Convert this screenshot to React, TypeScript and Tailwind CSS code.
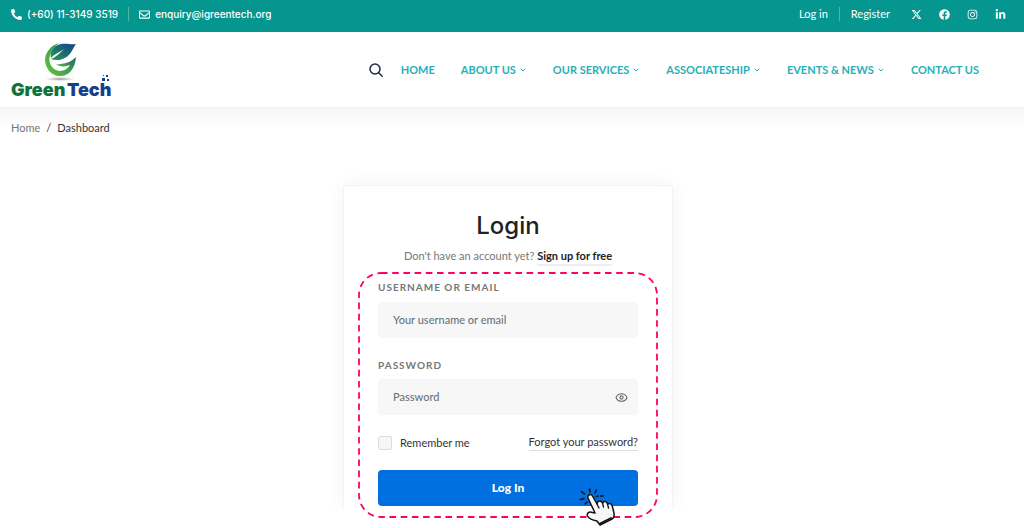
import { useState } from "react";
import { FaFacebook, FaInstagram, FaLinkedinIn, FaPhoneAlt, FaRegEnvelope } from "react-icons/fa";
import { FaXTwitter } from "react-icons/fa6";
import { ChevronDown, Eye } from "lucide-react";

const navItems = [
  { label: "HOME", menu: false },
  { label: "ABOUT US", menu: true },
  { label: "OUR SERVICES", menu: true },
  { label: "ASSOCIATESHIP", menu: true },
  { label: "EVENTS & NEWS", menu: true },
  { label: "CONTACT US", menu: false },
];

const socials = [
  { name: "X", Icon: FaXTwitter },
  { name: "Facebook", Icon: FaFacebook },
  { name: "Instagram", Icon: FaInstagram },
  { name: "LinkedIn", Icon: FaLinkedinIn },
];

function TopBar() {
  return (
    <div className="flex h-8 items-center justify-between bg-[#04968f] pr-[18px] pb-1 pl-[11px] text-[11px] text-white">
      <div className="flex items-center font-[Inter,sans-serif] text-[10px] font-medium">
        <a href="#phone" className="flex items-center gap-[5px]">
          <FaPhoneAlt size={11} />
          <span>(+60) 11-3149 3519</span>
        </a>
        <span className="mx-[10px] h-[14px] w-px bg-white/30" />
        <a href="#mail" className="flex items-center gap-[5px]">
          <FaRegEnvelope size={11} />
          <span>enquiry@igreentech.org</span>
        </a>
      </div>
      <div className="flex items-center">
        <a href="#login">Log in</a>
        <span className="mx-[11px] h-[14px] w-px bg-white/30" />
        <a href="#register">Register</a>
        <div className="ml-[21px] flex items-center gap-[17px]">
          {socials.map(({ name, Icon }) => (
            <a key={name} href="#social" aria-label={name}>
              <Icon size={11} />
            </a>
          ))}
        </div>
      </div>
    </div>
  );
}

function Logo() {
  return (
    <a href="#home" aria-label="GreenTech">
      <svg width="102" height="60" viewBox="0 0 102 60" className="block overflow-visible">
        <defs>
          <linearGradient id="ring" x1="0" y1="0.9" x2="1" y2="0.1">
            <stop offset="0" stopColor="#62c23c" />
            <stop offset="0.5" stopColor="#3ba34b" />
            <stop offset="1" stopColor="#16468b" />
          </linearGradient>
          <linearGradient id="leaf" x1="0" y1="1" x2="1" y2="0">
            <stop offset="0" stopColor="#2f9a4f" />
            <stop offset="0.45" stopColor="#1f6f70" />
            <stop offset="1" stopColor="#163f8c" />
          </linearGradient>
          <radialGradient id="ground">
            <stop offset="0" stopColor="#777" stopOpacity="0.8" />
            <stop offset="1" stopColor="#999" stopOpacity="0" />
          </radialGradient>
        </defs>
        <ellipse cx="49" cy="39" rx="15" ry="2" fill="url(#ground)" />
        <path
          d="M48 3 C41 5 35 11 34 19 C34 28 40 36 49 36 C58 36 64 29 65 17 C60 22 54 24 45 24.500 C50 27 54 27 59 25 C55 32 46 33 41 27 C36 21 38 10 48 3 Z"
          fill="url(#ring)"
        />
        <path
          d="M65 4 C61 9 60 17 50 19.500 C47 20.500 43 20 40 19 C45 17 49 13 53 9 C48 13 43 14 40 18 C38 12 43 5 50 4 C56 3 61 5 65 4 Z"
          fill="url(#leaf)"
        />
        <g fontFamily="Inter, sans-serif" fontSize="18" fontWeight="900">
          <text x="0" y="56" fill="#0d733b">Green</text>
          <text x="56" y="56" fill="#163f8c">Tech</text>
        </g>
        <g fill="#163f8c">
          <rect x="91" y="38" width="3" height="3" />
          <rect x="95" y="35" width="2" height="2" />
          <rect x="96" y="39" width="2" height="2" />
          <rect x="92" y="35" width="1" height="1" />
        </g>
      </svg>
    </a>
  );
}

function Header() {
  return (
    <header className="flex h-[75px] items-center justify-between bg-white pt-px pr-[45px] pl-[11px]">
      <Logo />
      <div className="flex items-center gap-[18px]">
        <button type="button" aria-label="Search" className="text-[#1e2a45]">
          <svg width="14" height="14" viewBox="0 0 14 14" fill="none" stroke="currentColor" strokeWidth="1.500" strokeLinecap="round">
            <circle cx="6" cy="6" r="5" />
            <path d="M9.700 9.700 L13.200 13.200" />
          </svg>
        </button>
        <nav className="flex items-center gap-[26px] text-[11px] font-bold text-[#27b0b8]">
          {navItems.map(({ label, menu }) => (
            <a key={label} href="#nav" className="flex items-center gap-[3px] whitespace-nowrap">
              {label}
              {menu && <ChevronDown size={8} strokeWidth={3} />}
            </a>
          ))}
        </nav>
      </div>
    </header>
  );
}

function HandCursor() {
  return (
    <svg
      className="pointer-events-none absolute right-[23px] -bottom-[20px]"
      width="36"
      height="38"
      viewBox="0 0 36 38"
      strokeLinecap="round"
      strokeLinejoin="round"
      aria-hidden="true"
    >
      <path
        d="M10.500 1 L11 4 M17.500 2 L16 5 M2.500 3.500 L5.500 6 M1.500 11.500 L5 10.500 M6 16 L8 14 M19 8 L17.500 8.500 M24 8 L21.500 8"
        stroke="#111"
        strokeWidth="1.600"
        fill="none"
      />
      <path
        d="M9 10 C8 7 12 5 13.500 8 L18 16 C18.500 12.500 22 12 23.500 15 C25 12.500 28 13 28.500 16 C31 14.500 33 16 33.500 19 L35 25 C35.500 28 35 30 33 31 L21 37 L18 33 C13 32 9.500 30 8.500 28 C7.500 25 10 23 13.500 24.500 L16 25 Z"
        fill="#f7f7f7"
        stroke="#111"
        strokeWidth="1.500"
      />
      <path d="M18 16 L20 20 M23.500 15 L24.500 19 M28.500 16 L29.500 20" stroke="#111" strokeWidth="1.300" />
      <path d="M21 35.500 L32 30" stroke="#111" strokeWidth="1.800" />
    </svg>
  );
}

function LoginCard() {
  const [visible, setVisible] = useState(false);
  const field =
    "h-9 w-full rounded-[4px] bg-[#f7f7f7] px-[15px] pb-px text-[11px] text-[#222] outline-none placeholder:font-medium placeholder:text-[#6c757d] placeholder:opacity-100";
  const label = "block text-[10px] leading-3 font-bold tracking-widest text-[#777]";
  return (
    <section className="relative w-full max-w-[330px] px-[35px] pt-[25px] pb-[2px]">
      <div className="absolute inset-0 rounded-t-[4px] border border-b-0 border-[#f3f3f3] bg-white shadow-[0_0_20px_rgba(0,0,0,0.05)] [clip-path:inset(-30px_-30px_0_-30px)]" />
      <div className="relative">
        <h1 className="text-center font-[Inter,sans-serif] text-2xl leading-8 font-medium text-[#222]">Login</h1>
        <p className="mt-[6px] text-center text-[11px] leading-4 text-[#777]">
          Don't have an account yet?{" "}
          <a href="#signup" className="inline-block border-b-2 border-[#eee] font-bold text-[#222]">
            Sign up for free
          </a>
        </p>
        <form className="relative mt-[15px]" onSubmit={(e) => e.preventDefault()}>
          <label htmlFor="username" className={label}>
            USERNAME OR EMAIL
          </label>
          <input id="username" type="text" placeholder="Your username or email" className={"mt-[9px] " + field} />
          <label htmlFor="password" className={"mt-[21px] " + label}>
            PASSWORD
          </label>
          <div className="relative mt-2">
            <input id="password" type={visible ? "text" : "password"} placeholder="Password" className={field} />
            <button
              type="button"
              aria-label="Show password"
              onClick={() => setVisible(!visible)}
              className="absolute inset-y-0 right-[10px] text-[#666]"
            >
              <Eye size={13} strokeWidth={2} />
            </button>
          </div>
          <div className="mt-[19px] flex items-center justify-between text-[11px] leading-4 text-[#333]">
            <label className="flex items-center gap-2">
              <input type="checkbox" className="size-[14px] appearance-none rounded-[2px] border border-[#ddd] bg-[#f7f7f7] checked:bg-[#0070e0]" />
              Remember me
            </label>
            <a href="#forgot" className="border-b border-[#ddd]">
              Forgot your password?
            </a>
          </div>
          <button type="submit" className="mt-[19px] block h-9 w-full rounded-[4px] bg-[#0070e0] text-xs font-black text-white">
            Log In
          </button>
          <div className="pointer-events-none absolute -inset-x-[19px] -top-2 -bottom-[11px]">
            <svg width="100%" height="100%" className="block overflow-visible" aria-hidden="true">
              <rect width="100%" height="100%" rx="22" fill="none" stroke="#ff0066" strokeWidth="1.800" strokeDasharray="6.600 4.600" />
            </svg>
          </div>
          <HandCursor />
        </form>
      </div>
    </section>
  );
}

export default function App() {
  return (
    <div className="min-h-screen bg-white font-[Lato,sans-serif]">
      <TopBar />
      <Header />
      <main className="bg-[linear-gradient(#f4f4f4,#fff_20px)] pt-3 pr-2">
        <nav aria-label="Breadcrumb" className="flex gap-[6px] pl-[11px] text-[11px] leading-[18px] text-[#333]">
          <a href="#home" className="text-[#777]">
            Home
          </a>
          <span>/</span>
          <span>Dashboard</span>
        </nav>
        <div className="mt-12 flex justify-center">
          <LoginCard />
        </div>
      </main>
    </div>
  );
}
